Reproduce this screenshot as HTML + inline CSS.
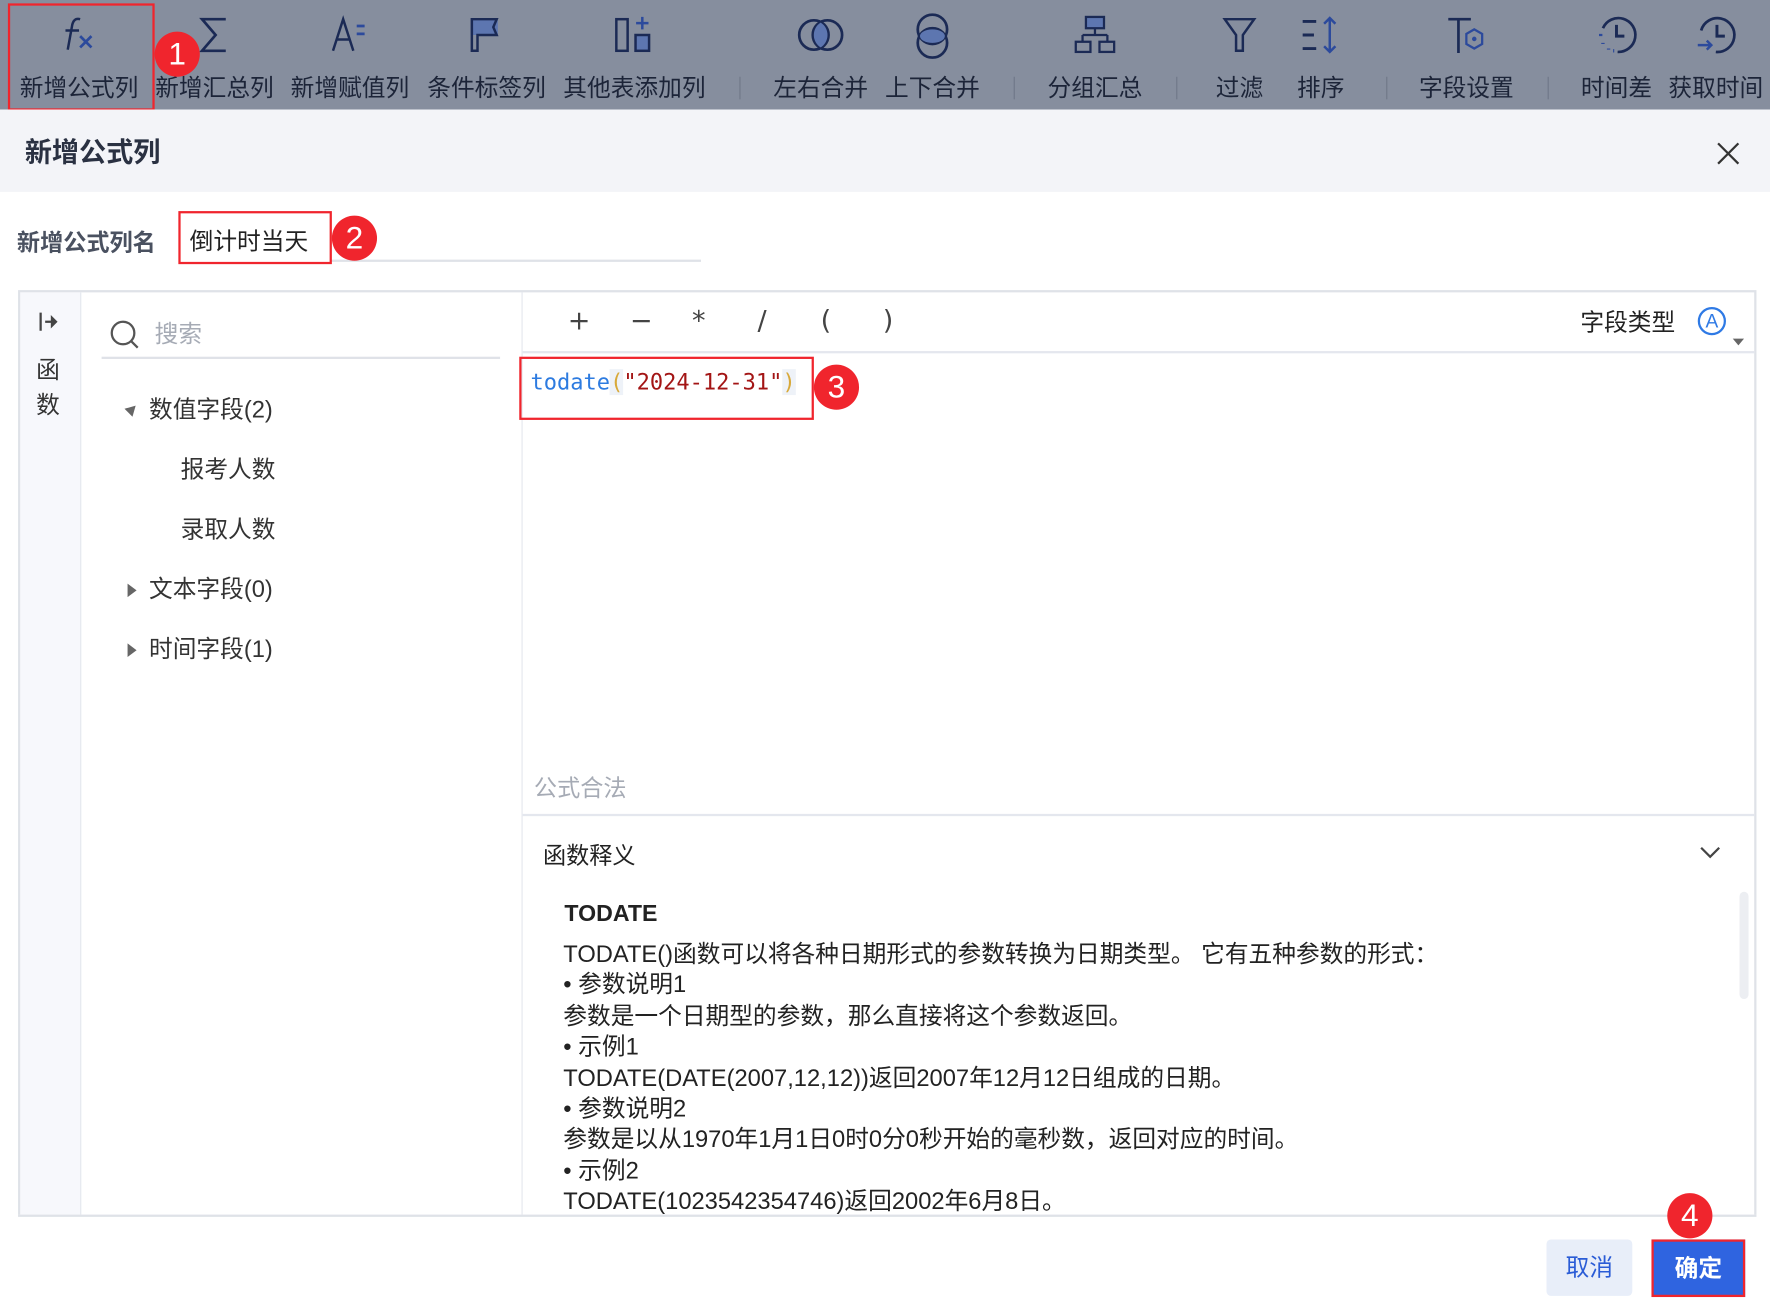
<!DOCTYPE html>
<html><head><meta charset="utf-8">
<style>
html,body{margin:0;padding:0;width:1770px;height:1310px;overflow:hidden;background:#fff}
#w{position:absolute;left:0;top:0;width:1568px;height:1160px;transform:scale(1.12883);transform-origin:0 0;font-family:"Liberation Sans","Noto Sans CJK SC",sans-serif;color:#1f2533}
.a{position:absolute}
.tb{left:0;top:0;width:1568px;height:97px;background:#868e9e}
.it{position:absolute;top:0;height:97px;text-align:center;transform:translateX(-50%);white-space:nowrap}
.it .l{position:absolute;top:64px;left:50%;transform:translateX(-50%);font-size:21px;color:#1c2438;line-height:30px}
.it svg{position:absolute;top:11px;left:50%;transform:translateX(-50%)}
.sep{position:absolute;top:68px;width:1px;height:20px;background:#6f7788}
.badge{position:absolute;width:40px;height:40px;border-radius:50%;background:#f0252d;color:#fff;font-size:28px;line-height:40px;text-align:center;transform:translate(-50%,-50%);font-family:"Liberation Sans",sans-serif}
.red{position:absolute;border:2px solid #f0252d;box-sizing:border-box}
.t21{font-size:21px;line-height:28px}
</style></head><body><div id="w">
<div class="a tb"></div>
<div class="it" style="left:70px;width:120px"><svg width="40" height="40" viewBox="0 0 40 40"><path d="M21 6c-4-1-6 1-7 5l-4 22M8 16h12" stroke="#1b2a55" stroke-width="2.2" fill="none"/><path d="M21 21l10 10M31 21l-10 10" stroke="#2c4a9c" stroke-width="2.4"/></svg><div class="l">新增公式列</div></div>
<div class="it" style="left:190px;width:120px"><svg width="40" height="40" viewBox="0 0 40 40"><path d="M30 6H9l12 14L9 34h21" stroke="#1b2a55" stroke-width="2.4" fill="none"/></svg><div class="l">新增汇总列</div></div>
<div class="it" style="left:310px;width:120px"><svg width="40" height="40" viewBox="0 0 40 40"><path d="M5 34L14 6l9 28M8.5 24h11" stroke="#1b2a55" stroke-width="2.2" fill="none"/><path d="M26 12h7M26 19h7" stroke="#2c4a9c" stroke-width="2.4"/></svg><div class="l">新增赋值列</div></div>
<div class="it" style="left:431px;width:120px"><svg width="40" height="40" viewBox="0 0 40 40"><rect x="6" y="6" width="24" height="14" fill="#5d76b0"/><path d="M7 34V6h22l-3 7 3 7H12v14z" stroke="#1b2a55" stroke-width="2.2" fill="none"/></svg><div class="l">条件标签列</div></div>
<div class="it" style="left:562px;width:130px"><svg width="40" height="40" viewBox="0 0 40 40"><rect x="4" y="6" width="10" height="28" stroke="#1b2a55" stroke-width="2.2" fill="none"/><rect x="21" y="20" width="12" height="14" stroke="#1b2a55" stroke-width="2.2" fill="#5d76b0"/><path d="M27 4v11M21.5 9.5h11" stroke="#2c4a9c" stroke-width="2.2"/></svg><div class="l">其他表添加列</div></div>
<div class="sep" style="left:655px"></div>
<div class="it" style="left:727px;width:100px"><svg width="44" height="40" viewBox="0 0 44 40"><circle cx="16" cy="20" r="13" stroke="#1b2a55" stroke-width="2.4" fill="none"/><circle cx="28" cy="20" r="13" stroke="#1b2a55" stroke-width="2.4" fill="none"/><path d="M22 9a13 13 0 0 1 0 22a13 13 0 0 1 0-22z" fill="#5d76b0"/></svg><div class="l">左右合并</div></div>
<div class="it" style="left:826px;width:100px"><svg width="40" height="44" viewBox="0 0 40 44"><circle cx="20" cy="15" r="13" stroke="#1b2a55" stroke-width="2.4" fill="none"/><circle cx="20" cy="27" r="13" stroke="#1b2a55" stroke-width="2.4" fill="none"/><ellipse cx="20" cy="21" rx="11" ry="6" fill="#5d76b0"/></svg><div class="l">上下合并</div></div>
<div class="sep" style="left:898px"></div>
<div class="it" style="left:970px;width:100px"><svg width="40" height="40" viewBox="0 0 40 40"><rect x="12" y="4" width="16" height="10" stroke="#1b2a55" stroke-width="2" fill="#5d76b0"/><path d="M20 14v6M9 20h22M9 20v6M31 20v6" stroke="#1b2a55" stroke-width="2" fill="none"/><rect x="3" y="26" width="13" height="9" stroke="#1b2a55" stroke-width="2" fill="none"/><rect x="24" y="26" width="13" height="9" stroke="#1b2a55" stroke-width="2" fill="none"/></svg><div class="l">分组汇总</div></div>
<div class="sep" style="left:1042px"></div>
<div class="it" style="left:1098px;width:60px"><svg width="40" height="40" viewBox="0 0 40 40"><path d="M7 6h26L23 20v14h-6V20z" stroke="#1b2a55" stroke-width="2.2" fill="none"/></svg><div class="l">过滤</div></div>
<div class="it" style="left:1170px;width:60px"><svg width="40" height="40" viewBox="0 0 40 40"><path d="M4 8h12M4 20h10M4 32h12" stroke="#1b2a55" stroke-width="2.6"/><path d="M28 5v30M23 10l5-5 5 5M23 30l5 5 5-5" stroke="#2c4a9c" stroke-width="2.2" fill="none"/></svg><div class="l">排序</div></div>
<div class="sep" style="left:1228px"></div>
<div class="it" style="left:1299px;width:100px"><svg width="40" height="40" viewBox="0 0 40 40"><path d="M4 6h20M13 6v30" stroke="#1b2a55" stroke-width="2.4"/><path d="M27 15l7 4v9l-7 4-7-4v-9z" stroke="#2c4a9c" stroke-width="2" fill="none"/><circle cx="27" cy="23.5" r="2" fill="#2c4a9c"/></svg><div class="l">字段设置</div></div>
<div class="sep" style="left:1371px"></div>
<div class="it" style="left:1432px;width:80px"><svg width="40" height="40" viewBox="0 0 40 40"><path d="M8 14A15 15 0 1 1 21 35" stroke="#1b2a55" stroke-width="2.4" fill="none"/><path d="M6 19v2M8 27v1M13 32v1M17 34h1" stroke="#2c4a9c" stroke-width="3"/><path d="M20 11v10h7" stroke="#1b2a55" stroke-width="2.6" fill="none"/></svg><div class="l">时间差</div></div>
<div class="it" style="left:1520px;width:90px"><svg width="40" height="40" viewBox="0 0 40 40"><path d="M7 16A15 15 0 1 1 20 35" stroke="#1b2a55" stroke-width="2.4" fill="none"/><path d="M4 29h12M12 25l4 4-4 4" stroke="#2c4a9c" stroke-width="2.2" fill="none"/><path d="M21 11v10h7" stroke="#1b2a55" stroke-width="2.6" fill="none"/></svg><div class="l">获取时间</div></div>
<div class="red" style="left:7px;top:3px;width:130px;height:95px"></div>
<div class="badge" style="left:157px;top:48px">1</div>

<div class="a" style="left:0;top:97px;width:1568px;height:73px;background:#f3f4f8"></div>
<div class="a" style="left:22px;top:119px;font-size:24px;font-weight:bold;color:#2a3142;line-height:34px">新增公式列</div>
<svg class="a" style="left:1520px;top:125px" width="22" height="22" viewBox="0 0 22 22"><path d="M2 2l18 18M20 2L2 20" stroke="#333" stroke-width="2"/></svg>

<div class="a" style="left:15px;top:202px;font-size:20.5px;font-weight:bold;color:#4a5160;line-height:28px">新增公式列名</div>
<div class="a" style="left:293px;top:230px;width:328px;height:2px;background:#dfe2e8"></div>
<div class="red" style="left:158px;top:187px;width:136px;height:47px"></div>
<div class="a t21" style="left:168px;top:201px;color:#222">倒计时当天</div>
<div class="badge" style="left:314px;top:211px">2</div>

<div class="a" style="left:16px;top:257px;width:1540px;height:821px;border:2px solid #dfe2e8;box-sizing:border-box"></div>
<div class="a" style="left:18px;top:259px;width:53px;height:817px;background:#f7f8fc;border-right:1px solid #e4e7ee"></div>
<svg class="a" style="left:34px;top:276px" width="20" height="18" viewBox="0 0 20 18"><path d="M2 1v16" stroke="#444" stroke-width="2"/><path d="M6 9h8" stroke="#444" stroke-width="2"/><path d="M11 3l6 6-6 6z" fill="#444"/></svg>
<div class="a t21" style="left:32px;top:315px;color:#333">函</div>
<div class="a t21" style="left:32px;top:346px;color:#333">数</div>
<div class="a" style="left:462px;top:259px;width:1px;height:817px;background:#e4e7ee"></div>
<svg class="a" style="left:97px;top:283px" width="28" height="28" viewBox="0 0 28 28"><circle cx="12" cy="12" r="10" stroke="#555" stroke-width="2" fill="none"/><path d="M19 19l6 6" stroke="#555" stroke-width="2"/></svg>
<div class="a t21" style="left:137px;top:283px;color:#a6abb5">搜索</div>
<div class="a" style="left:90px;top:316px;width:353px;height:2px;background:#dfe2e8"></div>
<div class="a" style="left:112px;top:358px;width:0;height:0;border-left:5px solid transparent;border-right:5px solid transparent;border-bottom:9px solid #666;transform:rotate(45deg)"></div>
<div class="a t21" style="left:132px;top:350px;color:#333">数值字段(2)</div>
<div class="a t21" style="left:160px;top:403px;color:#333">报考人数</div>
<div class="a t21" style="left:160px;top:456px;color:#333">录取人数</div>
<div class="a" style="left:113px;top:517px;width:0;height:0;border-top:6px solid transparent;border-bottom:6px solid transparent;border-left:8px solid #666"></div>
<div class="a t21" style="left:132px;top:509px;color:#333">文本字段(0)</div>
<div class="a" style="left:113px;top:570px;width:0;height:0;border-top:6px solid transparent;border-bottom:6px solid transparent;border-left:8px solid #666"></div>
<div class="a t21" style="left:132px;top:562px;color:#333">时间字段(1)</div>

<div class="a" style="left:463px;top:311px;width:1091px;height:2px;background:#e4e7ee"></div>
<div class="a" style="left:503px;top:269px;font-size:24px;color:#444;line-height:30px;font-family:'DejaVu Sans',sans-serif">
<span class="a" style="left:0">+</span><span class="a" style="left:55px">−</span><span class="a" style="left:110px">*</span><span class="a" style="left:168px">/</span><span class="a" style="left:224px">(</span><span class="a" style="left:279px">)</span></div>
<div class="a t21" style="left:1400px;top:273px;color:#222">字段类型</div>
<div class="a" style="left:1504px;top:272px;width:25px;height:25px;border:2px solid #2f7ae5;border-radius:50%;box-sizing:border-box;color:#2f7ae5;font-size:17px;line-height:21px;text-align:center">A</div>
<div class="a" style="left:1535px;top:300px;border-left:5px solid transparent;border-right:5px solid transparent;border-top:6px solid #666"></div>

<div class="red" style="left:460px;top:316px;width:261px;height:56px"></div>
<div class="a" style="left:470px;top:326px;font-family:'DejaVu Sans Mono','Liberation Mono',monospace;font-size:19.5px;line-height:26px;white-space:pre"><span style="color:#2d7be0">todate</span><span style="color:#d8a93a;background:#eef2f8">(</span><span style="color:#a31515">"2024-12-31"</span><span style="color:#d8a93a;background:#eef2f8">)</span></div>
<div class="badge" style="left:741px;top:343px">3</div>

<div class="a" style="left:473px;top:685px;font-size:20.5px;color:#a6abb5;line-height:28px">公式合法</div>
<div class="a" style="left:463px;top:721px;width:1091px;height:2px;background:#e4e7ee"></div>
<div class="a" style="left:481px;top:745px;font-size:20.5px;color:#222;line-height:28px">函数释义</div>
<svg class="a" style="left:1505px;top:748px" width="20" height="14" viewBox="0 0 20 14"><path d="M2 3l8 8 8-8" stroke="#444" stroke-width="2" fill="none"/></svg>
<div class="a" style="left:1541px;top:790px;width:8px;height:95px;background:#eceef2;border-radius:4px"></div>
<div class="a" style="left:500px;top:796px;font-size:20.5px;font-weight:bold;color:#222;line-height:28px">TODATE</div>
<div class="a" style="left:499px;top:832px;font-size:21px;color:#222;line-height:27.4px;white-space:nowrap">TODATE()函数可以将各种日期形式的参数转换为日期类型。 它有五种参数的形式：<br>• 参数说明1<br>参数是一个日期型的参数，那么直接将这个参数返回。<br>• 示例1<br>TODATE(DATE(2007,12,12))返回2007年12月12日组成的日期。<br>• 参数说明2<br>参数是以从1970年1月1日0时0分0秒开始的毫秒数，返回对应的时间。<br>• 示例2<br>TODATE(1023542354746)返回2002年6月8日。</div>
<div class="a" style="left:16px;top:1076px;width:1540px;height:84px;background:#fff"></div>
<div class="a" style="left:16px;top:1076px;width:1540px;height:2px;background:#dfe2e8"></div>

<div class="a" style="left:1370px;top:1098px;width:76px;height:50px;background:#e8eef9;border-radius:4px;color:#2a5cd6;font-size:21px;line-height:52px;text-align:center">取消</div>
<div class="a" style="left:1463px;top:1098px;width:83px;height:51px;background:#2f64e0;border:2px solid #f0252d;box-sizing:border-box;color:#fff;font-size:21px;font-weight:bold;line-height:49px;text-align:center">确定</div>
<div class="badge" style="left:1497px;top:1077px">4</div>
</div></body></html>
